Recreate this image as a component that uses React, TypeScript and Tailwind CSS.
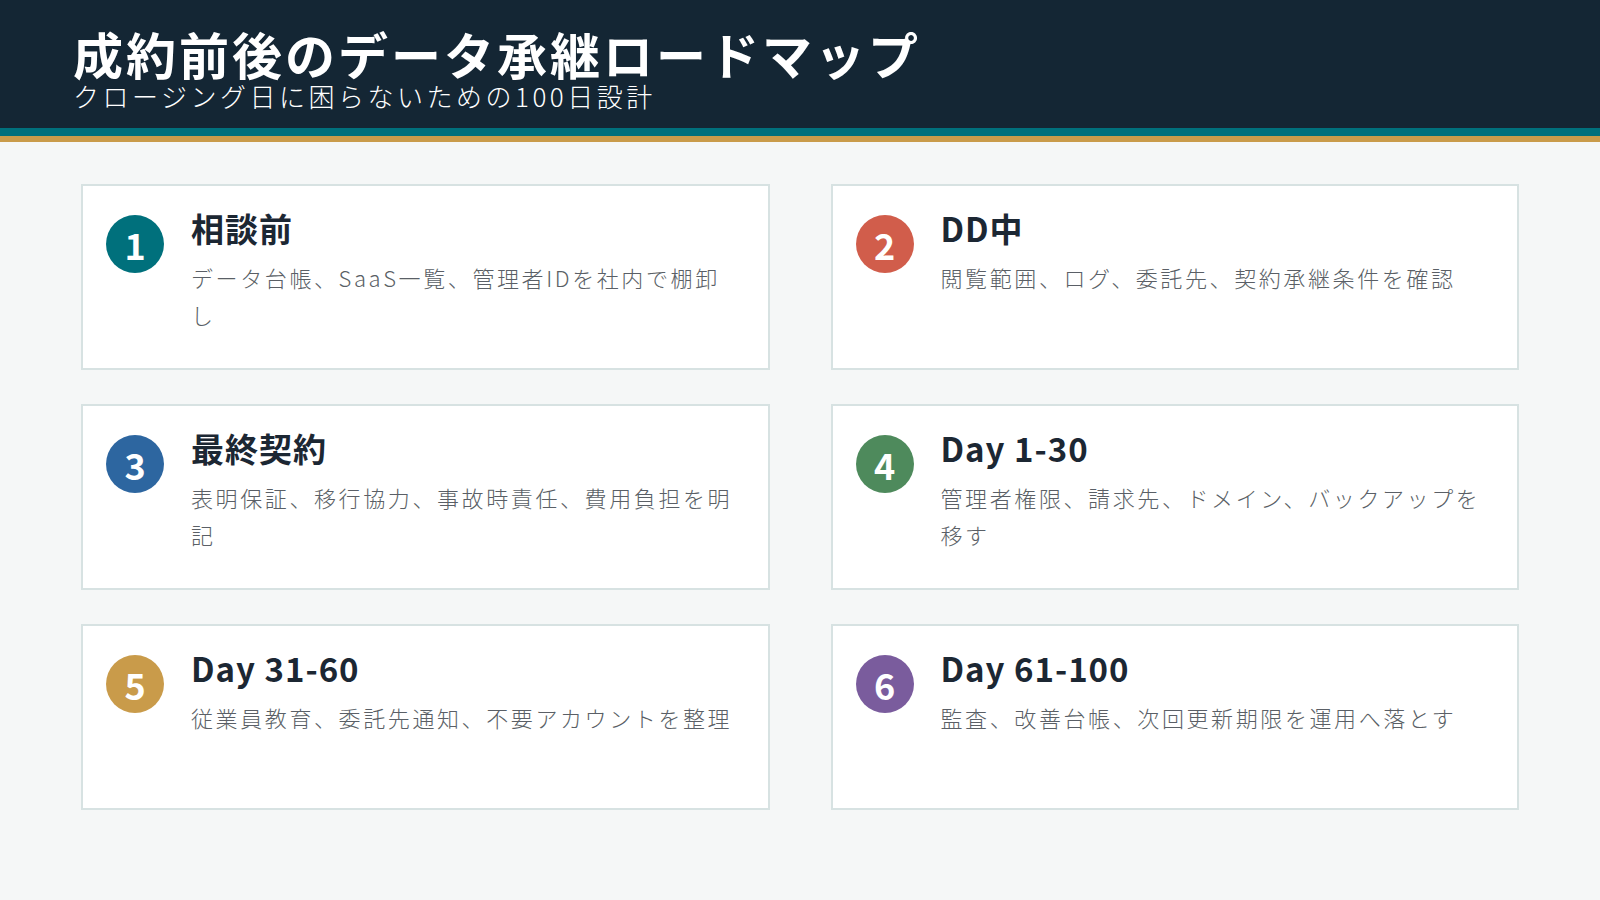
import React from "react";

const steps = [
  { n: "1", color: "bg-[#00707c]", title: "相談前", desc: "データ台帳、SaaS一覧、管理者IDを社内で棚卸し" },
  { n: "2", color: "bg-[#d15d4b]", title: "DD中", desc: "閲覧範囲、ログ、委託先、契約承継条件を確認" },
  { n: "3", color: "bg-[#2d66a0]", title: "最終契約", desc: "表明保証、移行協力、事故時責任、費用負担を明記" },
  { n: "4", color: "bg-[#4e8a5c]", title: "Day 1-30", desc: "管理者権限、請求先、ドメイン、バックアップを移す" },
  { n: "5", color: "bg-[#c99b4a]", title: "Day 31-60", desc: "従業員教育、委託先通知、不要アカウントを整理" },
  { n: "6", color: "bg-[#7a5c9d]", title: "Day 61-100", desc: "監査、改善台帳、次回更新期限を運用へ落とす" },
];

export default function App() {
  return (
    <div
      className="w-[1600px] h-[900px] bg-[#f5f7f7] flex flex-col"
      style={{ fontFamily: '"Noto Sans CJK JP", "Noto Sans", sans-serif' }}
    >
      {/* Header */}
      <div className="h-[128px] bg-[#142634] pl-[73px] pt-[26px] flex flex-col">
        <h1 className="text-white text-[50px] font-bold leading-[54px] tracking-[3px]">成約前後のデータ承継ロードマップ</h1>
        <p className="text-white text-[26px] leading-[32px] font-light tracking-[3.5px]">クロージング日に困らないための100日設計</p>
      </div>
      <div className="h-[8px] bg-[#00707c]" />
      <div className="h-[6px] bg-[#c99b4a]" />

      {/* Cards */}
      <div className="grid grid-cols-2 gap-x-[61px] gap-y-[34px] px-[81px] pt-[42px]">
        {steps.map((s) => (
          <div key={s.n} className="h-[186px] bg-white border-2 border-[#d7e2e2] flex gap-[27px] pl-[23px] pr-[30px] pt-[29px]">
            <div className={`w-[58px] h-[58px] shrink-0 rounded-full ${s.color} text-white text-[36px] font-semibold flex items-center justify-center`}>
              {s.n}
            </div>
            <div className="flex flex-col -mt-[8px]">
              <div className="text-[#1c2733] text-[33px] font-bold leading-[42px] tracking-[1px]">{s.title}</div>
              <div className="text-[#5a5f66] text-[22px] leading-[37px] mt-[10px] tracking-[2.6px] font-light">{s.desc}</div>
            </div>
          </div>
        ))}
      </div>
    </div>
  );
}
